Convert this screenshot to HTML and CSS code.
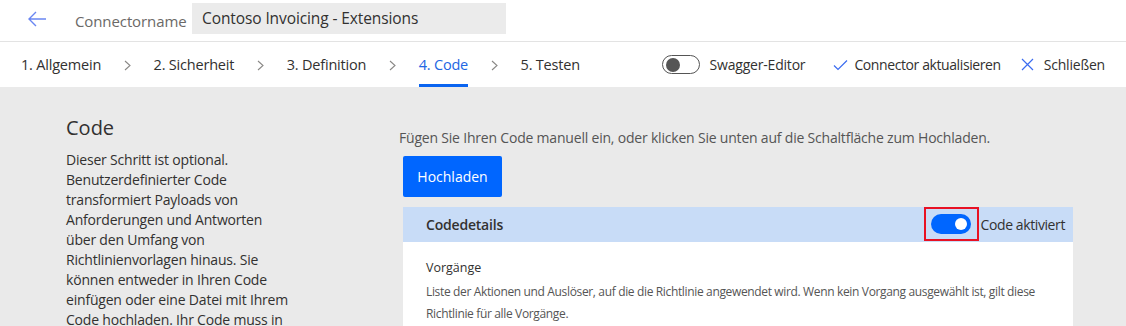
FILE: index.html
```html
<!DOCTYPE html>
<html lang="de">
<head>
<meta charset="utf-8">
<title>Connector – Code</title>
<link rel="stylesheet" href="styles.css">
</head>
<body>
<header class="topbar">
  <button class="back" aria-label="Zurück">
    <svg width="20" height="16" viewBox="0 0 20 16"><path d="M9 1 L2 8 L9 15 M2 8 H19" fill="none" stroke="#6a86f2" stroke-width="1.4"/></svg>
  </button>
  <span class="name-label">Connectorname</span>
  <div class="name-input">Contoso Invoicing - Extensions</div>
</header>
<nav class="tabs">
  <div class="steps">
    <span class="step">1. Allgemein</span>
    <span class="chev"><svg width="7" height="11" viewBox="0 0 7 11"><path d="M1 1 L6 5.5 L1 10" fill="none" stroke="#8a8886" stroke-width="1.1"/></svg></span>
    <span class="step">2. Sicherheit</span>
    <span class="chev"><svg width="7" height="11" viewBox="0 0 7 11"><path d="M1 1 L6 5.5 L1 10" fill="none" stroke="#8a8886" stroke-width="1.1"/></svg></span>
    <span class="step">3. Definition</span>
    <span class="chev"><svg width="7" height="11" viewBox="0 0 7 11"><path d="M1 1 L6 5.5 L1 10" fill="none" stroke="#8a8886" stroke-width="1.1"/></svg></span>
    <span class="step active">4. Code</span>
    <span class="chev"><svg width="7" height="11" viewBox="0 0 7 11"><path d="M1 1 L6 5.5 L1 10" fill="none" stroke="#8a8886" stroke-width="1.1"/></svg></span>
    <span class="step">5. Testen</span>
  </div>
  <div class="actions">
    <span class="action swagger"><span class="toggle off"><span class="knob"></span></span>Swagger-Editor</span>
    <span class="action update"><svg class="ico" width="15" height="12" viewBox="0 0 15 12"><path d="M1 6.5 L5 10.5 L14 1.5" fill="none" stroke="#3b6cf0" stroke-width="1.2"/></svg>Connector aktualisieren</span>
    <span class="action close"><svg class="ico" width="13" height="13" viewBox="0 0 13 13"><path d="M1 1 L12 12 M12 1 L1 12" fill="none" stroke="#3b6cf0" stroke-width="1.2"/></svg>Schließen</span>
  </div>
</nav>
<main class="content">
  <section class="intro">
    <h1>Code</h1>
    <p>Dieser Schritt ist optional.<br>Benutzerdefinierter Code<br>transformiert Payloads von<br>Anforderungen und Antworten<br>über den Umfang von<br>Richtlinienvorlagen hinaus. Sie<br>können entweder in Ihren Code<br>einfügen oder eine Datei mit Ihrem<br>Code hochladen. Ihr Code muss in</p>
  </section>
  <section class="editor">
    <p class="hint">Fügen Sie Ihren Code manuell ein, oder klicken Sie unten auf die Schaltfläche zum Hochladen.</p>
    <button class="upload">Hochladen</button>
    <div class="panel">
      <div class="panel-head">
        <span class="panel-title">Codedetails</span>
        <span class="panel-toggle">
          <span class="highlight"><span class="toggle on"><span class="knob"></span></span></span>
          Code aktiviert
        </span>
      </div>
      <div class="panel-body">
        <div class="field-label">Vorgänge</div>
        <p class="field-desc">Liste der Aktionen und Auslöser, auf die die Richtlinie angewendet wird. Wenn kein Vorgang ausgewählt ist, gilt diese Richtlinie für alle Vorgänge.</p>
      </div>
    </div>
  </section>
</main>
</body>
</html>
```
FILE: styles.css
```css
* { box-sizing: border-box; }
html, body { margin: 0; padding: 0; }
body {
  width: 1126px;
  height: 326px;
  overflow: hidden;
  font-family: "Segoe UI", "Open Sans", "Noto Sans", sans-serif;
  color: #323130;
  background: #eaeaea;
}
.topbar {
  height: 42px;
  background: #fff;
  border-bottom: 1px solid #e3e3e3;
  display: flex;
  align-items: center;
  padding-left: 27px;
}
.back {
  border: 0;
  background: none;
  padding: 0;
  width: 20px;
  height: 16px;
  display: flex;
  margin-top: -4px;
}
.name-label {
  margin-left: 28px;
  font-size: 15px;
  color: #6b6967;
  width: 117px;
  letter-spacing: -0.1px;
}
.name-input {
  width: 314px;
  height: 31px;
  margin-top: -5px;
  background: #ebebeb;
  font-size: 15.5px;
  line-height: 31px;
  padding-left: 10px;
  letter-spacing: -0.1px;
}
.tabs {
  height: 45px;
  background: #fff;
  display: flex;
  align-items: stretch;
  justify-content: space-between;
  padding: 0 21px 0 21px;
}
.steps, .actions {
  display: flex;
  align-items: center;
}
.step {
  font-size: 14.5px;
  height: 100%;
  display: flex;
  align-items: center;
  border-bottom: 3px solid transparent;
  padding-top: 3px;
  letter-spacing: -0.2px;
}
.step.active {
  color: #2266e3;
  border-bottom-color: #0a64f0;
}
.chev {
  width: 52.5px;
  display: flex;
  justify-content: center;
  padding-top: 1px;
}
.action {
  display: flex;
  align-items: center;
  font-size: 14px;
  letter-spacing: -0.2px;
}
.action.update {
  margin-left: 28px;
  letter-spacing: -0.4px;
}
.action.update .ico { margin-right: 6px; }
.action.close { margin-left: 20px; }
.action.close .ico { margin-right: 10px; }
.toggle {
  width: 38px;
  height: 19px;
  border-radius: 10px;
  display: flex;
  align-items: center;
  padding: 0 3px;
  margin-right: 10px;
}
.toggle.off {
  border: 1px solid #555;
  background: #fff;
}
.toggle.off .knob {
  width: 14px;
  height: 14px;
  border-radius: 50%;
  background: #555;
}
.content {
  display: grid;
  grid-template-columns: 337px 670px;
  padding: 27px 0 0 66px;
}
.intro h1 {
  margin: 0 0 8px;
  font-size: 20px;
  font-weight: 400;
  line-height: 28px;
}
.intro p {
  margin: 0;
  font-size: 14px;
  line-height: 20px;
  letter-spacing: -0.2px;
  white-space: nowrap;
}
.editor { padding-top: 14px; }
.hint {
  margin: 0 0 8px -4px;
  font-size: 14px;
  line-height: 20px;
  color: #555;
  letter-spacing: -0.2px;
}
.upload {
  display: block;
  width: 99px;
  height: 41px;
  border: 0;
  border-radius: 2px;
  background: #0066ff;
  color: #fff;
  font-family: inherit;
  font-size: 14px;
  margin-bottom: 10px;
}
.panel-head {
  height: 35px;
  background: #c8dcf7;
  display: flex;
  align-items: center;
  justify-content: space-between;
  padding: 0 8px 0 23px;
}
.panel-title {
  font-size: 14px;
  font-weight: 600;
  letter-spacing: -0.2px;
}
.panel-toggle {
  display: flex;
  align-items: center;
  font-size: 14px;
  letter-spacing: -0.4px;
}
.highlight {
  width: 55px;
  height: 34px;
  border: 2px solid #e81123;
  display: flex;
  align-items: center;
  justify-content: center;
  margin-right: 2px;
  margin-top: -1px;
}
.toggle.on {
  width: 40px;
  height: 20px;
  background: #0066ff;
  justify-content: flex-end;
  margin: 0;
  padding: 0 4px;
}
.toggle.on .knob {
  width: 12px;
  height: 12px;
  border-radius: 50%;
  background: #fff;
}
.panel-body {
  background: #fff;
  padding: 17px 20px 20px 23px;
  height: 120px;
}
.field-label {
  font-size: 12.5px;
  line-height: 18px;
  margin-bottom: 4px;
}
.field-desc {
  margin: 0;
  font-size: 12px;
  line-height: 22px;
  color: #555;
  letter-spacing: -0.35px;
  width: 640px;
}
```
